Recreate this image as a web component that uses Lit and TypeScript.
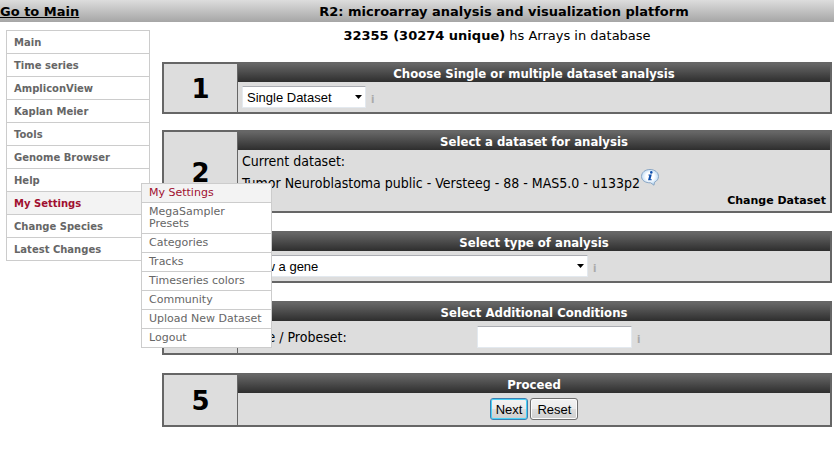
import { LitElement, html, css, nothing, type TemplateResult } from "lit";
import { customElement, property } from "lit/decorators.js";
import { classMap } from "lit/directives/class-map.js";

interface MenuEntry {
  label: string;
  active?: boolean;
  children?: MenuEntry[];
}

const MENU: MenuEntry[] = [
  { label: "Main" },
  { label: "Time series" },
  { label: "AmpliconView" },
  { label: "Kaplan Meier" },
  { label: "Tools" },
  { label: "Genome Browser" },
  { label: "Help" },
  {
    label: "My Settings",
    active: true,
    children: [
      { label: "My Settings", active: true },
      { label: "MegaSampler Presets" },
      { label: "Categories" },
      { label: "Tracks" },
      { label: "Timeseries colors" },
      { label: "Community" },
      { label: "Upload New Dataset" },
      { label: "Logout" },
    ],
  },
  { label: "Change Species" },
  { label: "Latest Changes" },
];

@customElement("side-menu")
export class SideMenu extends LitElement {
  static styles = css`
    :host {
      display: block;
    }
    .menu,
    .submenu {
      list-style: none;
      margin: 0;
      padding: 0;
      border: 1px solid #ccc;
      background: #fff;
    }
    .item {
      position: relative;
      border-top: 1px solid #ccc;
    }
    .item:first-child {
      border-top: 0;
    }
    .link {
      display: block;
      padding: 6px 7px 4px;
      font-size: 10px;
      line-height: 12px;
      font-weight: bold;
      color: #666;
      text-decoration: none;
    }
    .submenu .link {
      padding: 3px 7px;
      font-size: 11px;
      font-weight: normal;
    }
    .link.active {
      color: #a01030;
      background: #f3f3f3;
    }
    .submenu {
      position: absolute;
      z-index: 1;
      top: -9px;
      right: -123px;
      width: 129px;
    }
  `;

  private renderItem(entry: MenuEntry): TemplateResult {
    return html`<li class="item">
      <a href="#" class=${classMap({ link: true, active: !!entry.active })}>${entry.label}</a>
      ${entry.children
        ? html`<ul class="submenu">
            ${entry.children.map((c) => this.renderItem(c))}
          </ul>`
        : nothing}
    </li>`;
  }

  render() {
    return html`<nav>
      <ul class="menu">
        ${MENU.map((e) => this.renderItem(e))}
      </ul>
    </nav>`;
  }
}

@customElement("step-panel")
export class StepPanel extends LitElement {
  @property() step = "";
  @property() heading = "";

  static styles = css`
    :host {
      display: block;
    }
    .panel {
      display: grid;
      grid-template-columns: 73px minmax(0, 1fr);
      border: 2px solid #666;
      background: #ddd;
    }
    .number {
      display: flex;
      align-items: center;
      justify-content: center;
      padding-top: 2px;
      font-size: 26px;
      line-height: 28px;
      font-weight: bold;
    }
    .content {
      border-left: 1px solid #666;
    }
    .heading {
      margin: 0;
      height: 18px;
      font-family: "DejaVu Sans Condensed", "DejaVu Sans", sans-serif;
      font-size: 13px;
      line-height: 19px;
      font-weight: bold;
      text-align: center;
      color: #fff;
      background: linear-gradient(#666, #2e2e2e);
    }
    .body {
      padding: 4px;
      font-family: "DejaVu Sans Condensed", "DejaVu Sans", sans-serif;
      font-size: 14px;
    }
  `;

  render() {
    return html`<section class="panel">
      <div class="number">${this.step}</div>
      <div class="content">
        <h2 class="heading">${this.heading}</h2>
        <div class="body"><slot></slot></div>
      </div>
    </section>`;
  }
}

@customElement("app-root")
export class AppRoot extends LitElement {
  static styles = css`
    :host {
      display: block;
      font-family: Verdana, "DejaVu Sans", sans-serif;
      font-size: 13px;
      line-height: 16px;
      color: #000;
      background: #fff;
    }
    .topbar {
      display: grid;
      grid-template-columns: 174px minmax(0, 1fr);
      height: 22px;
      line-height: 23px;
      font-weight: bold;
      background: linear-gradient(#ddd, #a6a6a6);
    }
    .home {
      color: #000;
    }
    .title {
      margin: 0;
      font-size: 13px;
      text-align: center;
    }
    .layout {
      display: grid;
      grid-template-columns: 144px minmax(0, 1fr);
      gap: 12px;
      padding: 0 2px 0 6px;
    }
    .menu {
      margin-top: 8px;
    }
    .count {
      margin: 6px 0 18px;
      text-align: center;
    }
    .steps,
    .group {
      display: flex;
      flex-direction: column;
      gap: 18px;
    }
    .group {
      gap: 16px;
    }
    .row {
      display: flex;
      align-items: center;
      gap: 5px;
    }
    .picker {
      position: relative;
      display: flex;
    }
    .picker.short {
      width: 124px;
    }
    .picker.long {
      width: 346px;
    }
    .field {
      box-sizing: border-box;
      height: 22px;
      margin: 0;
      padding: 0 5px;
      border: 1px solid #e3e9ef;
      border-top-color: #abadb3;
      border-radius: 1px;
      background: #fff;
      color: #000;
      font: 13px "Liberation Sans", Arial, sans-serif;
      appearance: none;
    }
    .picker .field {
      width: 100%;
      padding: 0 4px;
    }
    .arrow {
      position: absolute;
      right: 4px;
      top: 9px;
      pointer-events: none;
    }
    .hint {
      padding-top: 6px;
      font-size: 10px;
      line-height: 12px;
      font-family: "DejaVu Sans", sans-serif;
      font-weight: bold;
      color: #aaa;
    }
    .current {
      margin: 0;
      line-height: 14px;
    }
    .dataset {
      display: flex;
      align-items: flex-end;
      height: 26px;
      line-height: 22px;
    }
    .info {
      display: flex;
      align-self: flex-start;
      padding: 0;
      border: 0;
      background: none;
    }
    .change {
      display: block;
      text-align: right;
      font-family: "DejaVu Sans", sans-serif;
      font-size: 11px;
      line-height: 14px;
      height: 13px;
      font-weight: bold;
      color: #000;
      text-decoration: none;
    }
    .condition {
      display: grid;
      grid-template-columns: 230px 155px auto;
      justify-content: start;
      padding: 1px 0;
    }
    .actions {
      display: flex;
      justify-content: center;
      gap: 2px;
      padding: 1px 0;
    }
    .button {
      height: 22px;
      padding: 0 6px;
      border: 1px solid #707070;
      border-radius: 3px;
      box-shadow: inset 0 0 0 1px #fcfcfc;
      background: linear-gradient(#f2f2f2 0, #ebebeb 50%, #ddd 50%, #cfcfcf);
      color: #000;
      font: 13px "Liberation Sans", Arial, sans-serif;
    }
    .button.primary {
      padding: 0 5px;
      border-color: #3c7fb1;
      box-shadow: inset 0 0 0 1px #48d1f7;
    }
  `;

  private renderPicker(label: string, value: string, size: "short" | "long") {
    return html`<div class="row">
      <div class="picker ${size}">
        <select class="field" aria-label=${label}>
          <option>${value}</option>
        </select>
        <svg class="arrow" width="7" height="4" viewBox="0 0 7 4" aria-hidden="true">
          <path d="M0 0h7L3.5 4z" />
        </svg>
      </div>
      <span class="hint">i</span>
    </div>`;
  }

  render() {
    return html`
      <header class="topbar">
        <a class="home" href="#">Go to Main</a>
        <h1 class="title">R2: microarray analysis and visualization platform</h1>
      </header>
      <div class="layout">
        <side-menu class="menu"></side-menu>
        <main>
          <p class="count"><b>32355 (30274 unique)</b> hs Arrays in database</p>
          <form class="steps" @submit=${(e: Event) => e.preventDefault()}>
            <div class="group">
              <step-panel step="1" heading="Choose Single or multiple dataset analysis">
                ${this.renderPicker("Single or multiple dataset", "Single Dataset", "short")}
              </step-panel>
              <step-panel step="2" heading="Select a dataset for analysis">
                <p class="current">Current dataset:</p>
                <div class="dataset">
                  <span>Tumor Neuroblastoma public - Versteeg - 88 - MAS5.0 - u133p2</span>
                  <button class="info" type="button" aria-label="Dataset information">
                    <svg width="20" height="18" viewBox="0 0 20 18" aria-hidden="true">
                      <defs>
                        <radialGradient id="bubble" cx="50%" cy="45%" r="60%">
                          <stop offset="0.4" stop-color="#fff" />
                          <stop offset="1" stop-color="#a4cdf2" />
                        </radialGradient>
                      </defs>
                      <path
                        d="M10 1.500C15 1.500 18.500 4.500 18.500 8.500c0 2.500-1.500 4.500-4 5.700L14 17.200l-3.400-2.400C5.500 15 1.500 12.500 1.500 8.500s3.500-7 8.500-7z"
                        fill="url(#bubble)"
                        stroke="#8aa6c4"
                      />
                      <circle cx="11.300" cy="4.400" r="1.300" fill="#0d4fae" />
                      <path d="M8.500 6.500h3.300l-1.300 4.700h1.200v1.100H8l1.300-4.700h-.9z" fill="#0d4fae" />
                    </svg>
                  </button>
                </div>
                <a class="change" href="#">Change Dataset</a>
              </step-panel>
            </div>
            <step-panel step="3" heading="Select type of analysis">
              ${this.renderPicker("Type of analysis", "View a gene", "long")}
            </step-panel>
            <step-panel step="4" heading="Select Additional Conditions">
              <div class="row condition">
                <label for="probe">Gene / Probeset:</label>
                <input class="field" id="probe" type="text" />
                <span class="hint">i</span>
              </div>
            </step-panel>
            <step-panel step="5" heading="Proceed">
              <div class="actions">
                <button class="button primary" type="submit">Next</button>
                <button class="button" type="reset">Reset</button>
              </div>
            </step-panel>
          </form>
        </main>
      </div>
    `;
  }
}
